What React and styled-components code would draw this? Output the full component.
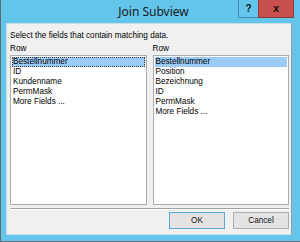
import styled, { createGlobalStyle } from 'styled-components';

const leftRows = ['Bestellnummer', 'ID', 'Kundenname', 'PermMask', 'More Fields ...'];
const rightRows = ['Bestellnummer', 'Position', 'Bezeichnung', 'ID', 'PermMask', 'More Fields ...'];

export default function App(){
    return(
        <>
        <Global />
        <Window>
            <TitleBar>
                <span />
                <Title>Join Subview</Title>
                <Caption>
                    <HelpButton>?</HelpButton>
                    <CloseButton>x</CloseButton>
                </Caption>
            </TitleBar>
            <Content>
                <Hint>Select the fields that contain matching data.</Hint>
                <Columns>
                    <Column>
                        <Label>Row</Label>
                        <ListBox>
                            {leftRows.map((r, i) => (
                                <Item key={r} selected={i === 0} focused={i === 0}>{r}</Item>
                            ))}
                        </ListBox>
                    </Column>
                    <Column>
                        <Label>Row</Label>
                        <ListBox>
                            {rightRows.map((r, i) => (
                                <Item key={r} selected={i === 0}>{r}</Item>
                            ))}
                        </ListBox>
                    </Column>
                </Columns>
                <Separator />
                <Buttons>
                    <Button primary>OK</Button>
                    <Button>Cancel</Button>
                </Buttons>
            </Content>
        </Window>
        </>
    )
}

const Global = createGlobalStyle`
    body {
        margin: 0;
        background: #ffffff;
        font-family: 'Liberation Sans', Arial, sans-serif;
    }
`;

const Window = styled.div`
    width: 300px;
    height: 242px;
    box-sizing: border-box;
    background: #62c5e9;
    border-left: 1px solid #5f6b70;
    border-bottom: 1px solid #6d7478;
    display: flex;
    flex-direction: column;
`;

const TitleBar = styled.div`
    height: 23px;
    display: grid;
    grid-template-columns: 1fr auto 1fr;
`;

const Title = styled.div`
    font-family: 'Noto Sans', 'Open Sans', sans-serif;
    font-size: 12px;
    line-height: 23px;
    color: #1a1a1a;
    padding-left: 6px;
`;

const Caption = styled.div`
    display: flex;
    justify-content: flex-end;
    align-items: flex-start;
    padding-right: 6px;
`;

const HelpButton = styled.div`
    width: 20px;
    height: 18px;
    box-sizing: border-box;
    border: 1px solid #3f8fb3;
    border-top: none;
    border-right: none;
    display: flex;
    justify-content: center;
    align-items: center;
    font-size: 10px;
    font-weight: bold;
    color: #111;
`;

const CloseButton = styled.div`
    width: 36px;
    height: 18px;
    box-sizing: border-box;
    background: #c7504d;
    border: 1px solid #8d3a38;
    border-top: none;
    display: flex;
    justify-content: center;
    align-items: center;
    font-size: 11px;
    font-weight: bold;
    color: #111;
    padding-bottom: 2px;
`;

const Content = styled.div`
    flex: 1;
    margin: 0 8px 6px 5px;
    background: #f0f0f0;
    border: 1px solid #c9dce5;
    border-right-color: #8f9ca3;
    display: flex;
    flex-direction: column;
    padding: 6px 2px 5px 3px;
    font-size: 8.2px;
    line-height: 11px;
    color: #000;
`;

const Hint = styled.div`
    height: 11px;
`;

const Columns = styled.div`
    display: grid;
    grid-template-columns: 1fr 1fr;
    gap: 6px;
    margin-top: 2px;
`;

const Column = styled.div`
    display: flex;
    flex-direction: column;
`;

const Label = styled.div`
    height: 11px;
    margin-bottom: 1px;
`;

const ListBox = styled.div`
    height: 150px;
    box-sizing: border-box;
    background: #ffffff;
    border: 1px solid #a9adb3;
    padding: 1px;
    display: flex;
    flex-direction: column;
`;

const Item = styled.div`
    height: 10px;
    line-height: 10px;
    box-sizing: border-box;
    padding-left: 1px;
    background: ${p => p.selected ? '#9ccbf6' : 'transparent'};
    outline: ${p => p.focused ? '1px dotted #3a3a3a' : 'none'};
    outline-offset: -1px;
    white-space: nowrap;
`;

const Separator = styled.div`
    height: 1px;
    margin-top: 3px;
    background: #a3a3a3;
    border-bottom: 1px solid #ffffff;
`;

const Buttons = styled.div`
    display: flex;
    justify-content: flex-end;
    gap: 8px;
    margin-top: 2px;
`;

const Button = styled.div`
    width: 56px;
    height: 17px;
    box-sizing: border-box;
    background: #e3e3e3;
    border: 1px solid ${p => p.primary ? '#5ba6dc' : '#adadad'};
    display: flex;
    justify-content: center;
    align-items: center;
    font-size: 8.2px;
    color: #111;
`;
